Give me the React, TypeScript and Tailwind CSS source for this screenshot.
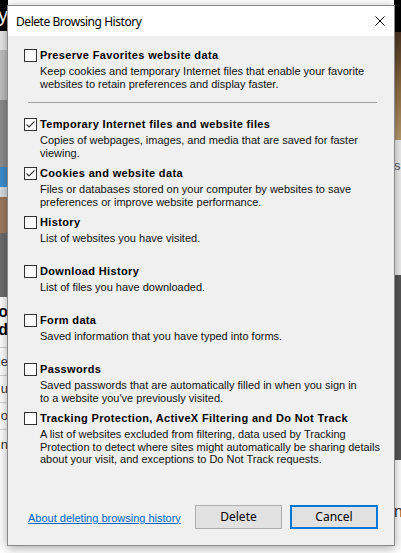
import { useState } from "react";

type Item = {
  label: string;
  desc: string[];
  checked: boolean;
};

const items: Item[] = [
  {
    label: "Temporary Internet files and website files",
    desc: [
      "Copies of webpages, images, and media that are saved for faster",
      "viewing.",
    ],
    checked: true,
  },
  {
    label: "Cookies and website data",
    desc: [
      "Files or databases stored on your computer by websites to save",
      "preferences or improve website performance.",
    ],
    checked: true,
  },
  {
    label: "History",
    desc: ["List of websites you have visited."],
    checked: false,
  },
  {
    label: "Download History",
    desc: ["List of files you have downloaded."],
    checked: false,
  },
  {
    label: "Form data",
    desc: ["Saved information that you have typed into forms."],
    checked: false,
  },
  {
    label: "Passwords",
    desc: [
      "Saved passwords that are automatically filled in when you sign in",
      "to a website you've previously visited.",
    ],
    checked: false,
  },
  {
    label: "Tracking Protection, ActiveX Filtering and Do Not Track",
    desc: [
      "A list of websites excluded from filtering, data used by Tracking",
      "Protection to detect where sites might automatically be sharing details",
      "about your visit, and exceptions to Do Not Track requests.",
    ],
    checked: false,
  },
];

function CheckBox({ checked, onClick }: { checked: boolean; onClick: () => void }) {
  return (
    <button
      onClick={onClick}
      className="w-[13px] h-[13px] shrink-0 border border-[#333333] bg-white flex items-center justify-center"
    >
      {checked && (
        <svg width="11" height="11" viewBox="0 0 11 11">
          <path d="M1.5 5.5 L4 8 L9.5 2.5" fill="none" stroke="#333333" strokeWidth="1.1" />
        </svg>
      )}
    </button>
  );
}

function Option({
  item,
  onToggle,
}: {
  item: Item;
  onToggle: () => void;
}) {
  return (
    <div className="flex gap-[3px]">
      <CheckBox checked={item.checked} onClick={onToggle} />
      <div className="flex flex-col">
        <div className="font-bold leading-[13px] tracking-[0.35px] text-black">{item.label}</div>
        <div className="mt-[3px] min-h-[25px] leading-[12.5px] text-[#111111]">
          {item.desc.map((line) => (
            <div key={line}>{line}</div>
          ))}
        </div>
      </div>
    </div>
  );
}

export default function App() {
  const [preserve, setPreserve] = useState(false);
  const [opts, setOpts] = useState(items);

  const toggle = (i: number) =>
    setOpts((prev) =>
      prev.map((o, idx) => (idx === i ? { ...o, checked: !o.checked } : o))
    );

  return (
    <div className="relative w-[401px] h-[553px] overflow-hidden bg-white font-['Liberation_Sans',Arial,sans-serif]">
      {/* Page behind the dialog */}
      <div className="flex h-full">
        <div className="w-[8px] flex flex-col">
          <div className="h-[31px] bg-black flex justify-end overflow-hidden text-white text-[20px] leading-[30px]">
            ry
          </div>
          <div className="h-[19px] bg-[#e8e8e8]" />
          <div className="h-[50px] bg-[#bfbfbf]" />
          <div className="h-[67px] bg-[#8c8c8c]" />
          <div className="h-[20px] bg-[#3d8fd0]" />
          <div className="h-[10px] bg-[#d6dde4]" />
          <div className="h-[36px] bg-[#a07a5e]" />
          <div className="h-[64px] bg-[#6e6e6e]" />
          <div className="h-[50px] bg-white font-bold text-[16px] leading-[18px] flex flex-col items-end overflow-hidden pt-[6px]">
            <span>o</span>
            <span>d</span>
          </div>
          <div className="flex flex-col text-[13px] text-[#333] overflow-hidden">
            <div className="h-[28px] border-t border-[#d0d0d0] flex items-center justify-end">He</div>
            <div className="h-[27px] border-t border-[#d0d0d0] flex items-center justify-end">u</div>
            <div className="h-[27px] border-t border-[#d0d0d0] flex items-center justify-end">o</div>
            <div className="h-[30px] border-t border-[#d0d0d0] flex items-center justify-end">n</div>
          </div>
        </div>
        <div className="flex-1" />
        <div className="w-[7px] flex flex-col">
          <div className="h-[32px] bg-black" />
          <div className="h-[108px] bg-gradient-to-b from-[#4a3320] via-[#8a6a40] to-[#b89a6c]" />
          <div className="h-[135px] bg-[#eeeeee] text-[13px] text-[#555] pt-[16px] overflow-hidden">s</div>
          <div className="h-[185px] bg-[#555555]" />
          <div className="flex-1 bg-white text-[16px] text-[#333] pt-[40px] overflow-hidden">n</div>
        </div>
      </div>

      {/* Dialog */}
      <div className="absolute left-[7px] top-[5px] w-[388px] h-[541px] flex flex-col border border-[#8a8a8a] bg-[#f0f0f0] shadow-[0_2px_10px_rgba(0,0,0,0.35)] text-[11px]">
        <div className="h-[30px] bg-white flex items-center justify-between pl-[8px] pr-[9px]">
          <span className="text-[12px] text-black font-['Noto_Sans',sans-serif] tracking-[-0.45px] mt-[1px]">
            Delete Browsing History
          </span>
          <svg width="10" height="10" viewBox="0 0 10 10">
            <path d="M0.5 0.5 L9.5 9.5 M9.5 0.5 L0.5 9.5" stroke="#000" strokeWidth="1" />
          </svg>
        </div>

        <div className="flex-1 flex flex-col pl-[16px] pt-[13px]">
          <Option
            item={{
              label: "Preserve Favorites website data",
              desc: [
                "Keep cookies and temporary Internet files that enable your favorite",
                "websites to retain preferences and display faster.",
              ],
              checked: preserve,
            }}
            onToggle={() => setPreserve(!preserve)}
          />

          <div className="ml-[4px] mt-[12px] mb-[15px] w-[349px] h-px bg-[#a0a0a0]" />

          <div className="flex flex-col gap-[8px]">
            {opts.map((item, i) => (
              <Option key={item.label} item={item} onToggle={() => toggle(i)} />
            ))}
          </div>

          <div className="mt-auto mb-[16px] flex items-center pl-[4px] pr-[16px]">
            <a
              href="#"
              className="text-[#0066cc] underline text-[11px] mt-[2px]"
            >
              About deleting browsing history
            </a>
            <div className="ml-auto flex gap-[8px] font-['Noto_Sans',sans-serif] text-[12px]">
              <button className="w-[87px] h-[24px] bg-[#e1e1e1] border border-[#adadad] text-black">
                Delete
              </button>
              <button className="w-[88px] h-[24px] bg-[#e1e1e1] border-2 border-[#0078d7] text-black">
                Cancel
              </button>
            </div>
          </div>
        </div>
      </div>
    </div>
  );
}
